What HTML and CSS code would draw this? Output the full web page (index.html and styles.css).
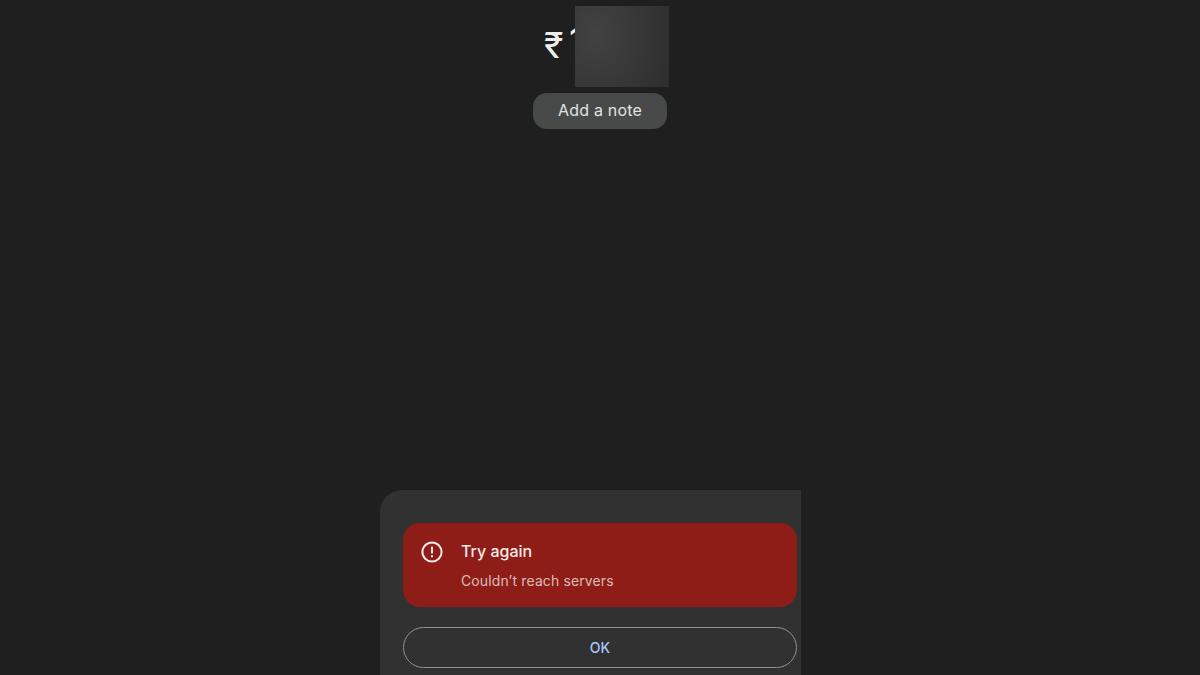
FILE: index.html
```html
<!DOCTYPE html>
<html lang="en">
<head>
<meta charset="utf-8">
<title>Try again</title>
<link rel="stylesheet" href="styles.css">
</head>
<body>
<main class="page">
  <section class="top">
    <div class="amount">
      <span class="rupee">₹</span>
      <span class="digits">1</span>
      <div class="redact"></div>
    </div>
    <button class="note">Add a note</button>
  </section>
  <section class="sheet">
    <div class="banner">
      <svg class="icon" viewBox="0 0 24 24" aria-hidden="true">
        <circle cx="12" cy="12" r="9.6" fill="none" stroke="#f6e6e3" stroke-width="2"/>
        <rect x="11" y="6.6" width="2" height="6.8" fill="#f6e6e3"/>
        <rect x="11" y="15.2" width="2" height="2.1" fill="#f6e6e3"/>
      </svg>
      <div class="msg">
        <div class="title">Try again</div>
        <div class="sub">Couldn’t reach servers</div>
      </div>
    </div>
    <button class="ok">OK</button>
  </section>
</main>
</body>
</html>
```
FILE: styles.css
```css
* { box-sizing: border-box; }
html, body { margin: 0; height: 100%; }
body { background: #1f1f1f; font-family: Inter, "Noto Sans", sans-serif; overflow: hidden; }
.page { width: 1200px; height: 675px; display: flex; flex-direction: column; justify-content: space-between; overflow: hidden; }
.top { display: flex; flex-direction: column; align-items: center; }
.amount { position: relative; width: 134px; height: 93px; display: flex; align-items: flex-start; padding: 24px 0 0 11px; color: #ededed; }
.rupee { font-size: 36px; line-height: 42px; width: 25px; }
.digits { font-size: 38px; line-height: 42px; margin-top: -4px; }
.redact { position: absolute; left: 42px; top: 6px; width: 94px; height: 81px; background: radial-gradient(ellipse 95px 120px at 22% 35%, #424242, #2b2b2b); }
.note { width: 134px; height: 36px; border: 0; border-radius: 14px; background: #484a49; color: #e2e2e2; font: 400 16px Inter, sans-serif; letter-spacing: 0.2px; padding: 0 0 2px; }
.sheet { width: 421px; height: 185px; margin-left: 380px; padding: 33px 4px 0 23px; background: #313131; border-radius: 22px 0 0 0; }
.banner { height: 84px; border-radius: 17px; background: #8e1d18; display: flex; padding: 17px 17px; gap: 17px; }
.icon { width: 24px; height: 24px; flex: none; }
.msg { display: flex; flex-direction: column; gap: 10px; margin-top: 1px; }
.title { font-size: 16px; line-height: 20px; font-weight: 500; color: #f6ecea; }
.sub { font-size: 14px; line-height: 20px; color: #dcbcb8; letter-spacing: 0.12px; }
.ok { display: block; width: 394px; height: 41px; margin-top: 20px; border: 1px solid #929292; border-radius: 21px; background: transparent; color: #a8c7fa; font: 500 14px Inter, sans-serif; padding: 0; }
```
